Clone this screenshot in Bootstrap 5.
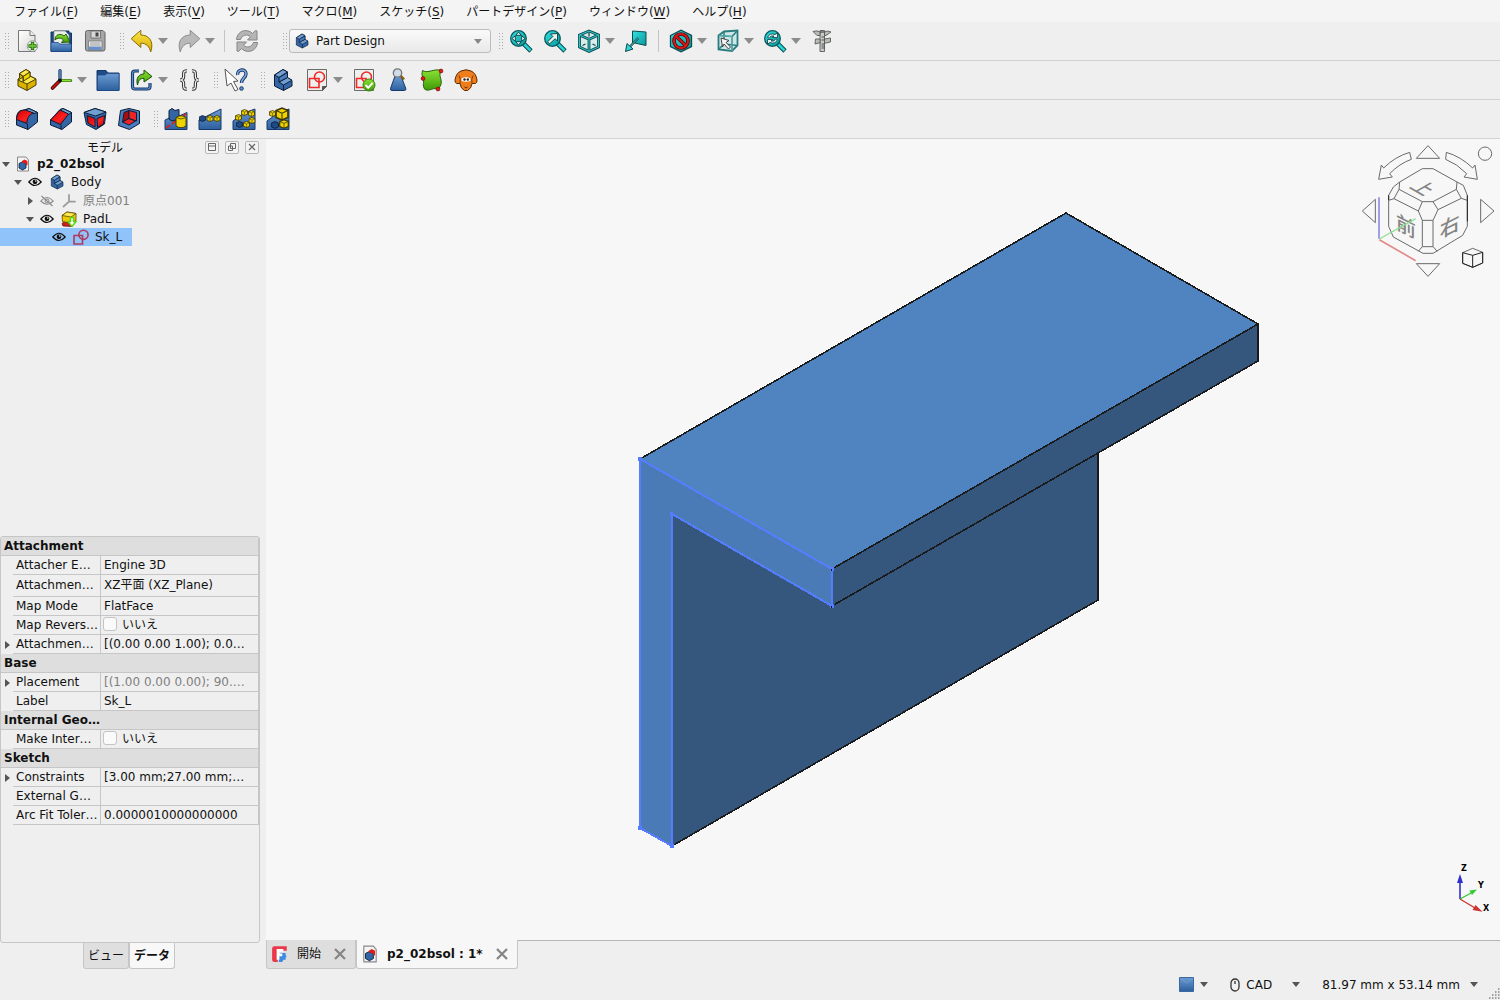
<!DOCTYPE html>
<html lang="ja">
<head>
<meta charset="utf-8">
<meta name="viewport" content="width=device-width, initial-scale=1">
<title>p2_02bsol</title>
<link href="https://cdn.jsdelivr.net/npm/bootstrap@5.3.0/dist/css/bootstrap.min.css" rel="stylesheet">
<style>
  body { font: 12px/18px "DejaVu Sans", "Noto Sans CJK JP", sans-serif; color: #111; background: #efefef; }
  button { color: inherit; }
  .sprite { width: 0; height: 0; position: absolute; }
  .menu-strip { height: 22px; padding-left: 14px; gap: 22px; background: #f4f4f4; line-height: 24px; }
  .menu-strip a { color: #111; text-decoration: none; white-space: nowrap; }
  .menu-strip u { text-underline-offset: 2px; }
  .tool-row { height: 39px; border-bottom: 1px solid #d2d2d2; padding-left: 2px; gap: 7px; }
  .tool-group { display: flex; align-items: center; gap: 4px; }
  .grip { width: 10px; height: 18px; margin-right: -4px; background: radial-gradient(circle, #aaa 0 0.7px, transparent 1px) 2px 0 / 3px 3px; background-clip: content-box; padding: 0 2px; }
  .tool { width: 30px; height: 30px; padding: 0; border: 0; background: none; display: flex; align-items: center; justify-content: center; flex: none; }
  .tool.has-menu { width: 43px; justify-content: flex-start; padding-left: 3px; gap: 4px; }
  .tool svg.ico { width: 24px; height: 24px; }
  .tri { width: 0; height: 0; border: 5px solid transparent; border-top: 6px solid #8c8c8c; border-bottom: 0; }
  .tri-s { width: 0; height: 0; border: 4px solid transparent; border-top: 5px solid #555; border-bottom: 0; }
  .tri-r { width: 0; height: 0; border: 4px solid transparent; border-left: 5px solid #555; border-right: 0; }
  .tool-sep { width: 1px; height: 22px; background: #c4c4c4; margin: 0 3px; }
  .wb-group { margin-left: 11px; }
  .view-group { margin-left: -2px; }
  .wb-box { position: relative; width: 202px; margin-left: -1px; }
  .wb-box select { width: 100%; height: 24px; appearance: none; border: 1px solid #bcbcbc; border-radius: 3px; background: linear-gradient(#fafafa, #e9e9e9); padding: 0 24px 0 26px; color: #111; }
  .wb-box svg { position: absolute; left: 5px; top: 4px; width: 16px; height: 16px; pointer-events: none; }
  .wb-box .tri-s { position: absolute; right: 9px; top: 10px; border-top-color: #888; pointer-events: none; }
  .work { min-height: 0; }
  .docs { min-width: 0; }
  .side { width: 260px; flex: none; margin-right: 6px; }
  .side-head { height: 16px; line-height: 18px; padding-right: 1px; gap: 6px; }
  .side-head span { padding: 2px 76px 0 0; }
  .dock-btn { width: 14px; height: 13px; padding: 0; border: 1px solid #b8b8b8; border-radius: 2px; background: #f4f4f4; display: flex; align-items: center; justify-content: center; }
  .tree { flex: 382 1 0; min-height: 0; overflow: hidden; }
  .tree li { height: 18px; display: flex; align-items: center; white-space: nowrap; }
  .tree .arr { width: 12px; display: flex; justify-content: center; }
  .tree svg { width: 16px; height: 16px; flex: none; }
  .tree .doc { margin-left: 3px; }
  .tree .eye { width: 14px; margin: 0 7px 0 4px; }
  .tree .lbl { padding-left: 6px; }
  .tree .lv1 { padding-left: 12px; }
  .tree .lv2 { padding-left: 24px; }
  .tree .lv3 { padding-left: 48px; background: #90c3f9; width: 132px; }
  .tree .tall { height: 19px; color: #808080; }
  .props { flex: 406 1 0; min-height: 0; overflow: hidden; border: 1px solid #c6c6c6; border-radius: 3px; }
  .props table { table-layout: fixed; width: 100%; border-collapse: separate; border-spacing: 0; }
  .props td, .props th { height: 19px; padding: 0 0 0 3px; line-height: 18px; border-bottom: 1px solid #c6c6c6; border-right: 1px solid #c6c6c6; white-space: nowrap; }
  .props th { background: #dedede; }
  .props td.exp { border: 0; padding: 0 0 0 4px; }
  .props .high td { height: 22px; line-height: 21px; }
  .props .dim { color: #808080; }
  .props input { appearance: none; width: 14px; height: 14px; border: 1px solid #c4c4c4; border-radius: 3px; background: #fafafa; margin: 0 5px 0 -1px; vertical-align: -2px; }
  .low-tabs { padding-right: 2px; }
  .low-tabs button { height: 26px; border: 1px solid #c6c6c6; border-top: 0; border-radius: 0 0 3px 3px; padding: 0 4px; background: #dfdfdf; }
  .low-tabs button.on { background: #f8f8f8; font-weight: bold; }
  .view { background: #f7f7f7; position: relative; flex: 1 1 0; min-height: 0; }
  .view .model { display: block; width: 100%; height: 100%; }
  .navcube { position: absolute; right: 0; top: 0; width: 150px; height: 149px; font-family: "Noto Sans CJK JP", sans-serif; }
  .axes { position: absolute; right: 0; bottom: 20px; width: 50px; height: 60px; font: bold 8px "DejaVu Sans", sans-serif; }
  .doc-tabs { height: 29px; }
  .doc-tab { display: flex; align-items: center; height: 29px; border: 1px solid #c6c6c6; border-top: 0; border-radius: 0 0 3px 3px; background: #dedede; padding: 0 8px 0 4px; }
  .doc-tab.on { background: #f7f7f7; font-weight: bold; }
  .doc-tab > svg { width: 18px; height: 18px; }
  .doc-tab button { border: 0; background: none; padding: 0; display: flex; }
  .doc-tab .tab-name { padding: 0 12px 0 8px; }
  .doc-line { border-top: 1px solid #b4b4b4; }
  .stat { height: 31px; position: relative; padding-right: 22px; gap: 22px; }
  .stat button { border: 0; background: none; padding: 0; display: flex; align-items: center; gap: 6px; }
  .stat .nav-style .tri-s { margin-left: 14px; }
  .stat .corner { position: absolute; right: 0; bottom: 0; width: 12px; height: 12px; }
</style>
</head>
<body>
<svg class="sprite" aria-hidden="true">
  <defs>
    <linearGradient id="gBlue" x1="0" y1="0" x2="0" y2="1"><stop offset="0" stop-color="#6b9bd2"/><stop offset="1" stop-color="#2c5f9e"/></linearGradient>
    <linearGradient id="gYel" x1="0" y1="0" x2="0" y2="1"><stop offset="0" stop-color="#fbe84a"/><stop offset="1" stop-color="#d8a900"/></linearGradient>
    <linearGradient id="gTeal" x1="0" y1="0" x2="1" y2="1"><stop offset="0" stop-color="#34e0e2"/><stop offset="1" stop-color="#06989a"/></linearGradient>
    <linearGradient id="gGrn" x1="0" y1="0" x2="0" y2="1"><stop offset="0" stop-color="#8ae234"/><stop offset="1" stop-color="#3f9a06"/></linearGradient>
    <linearGradient id="gRed" x1="0" y1="0" x2="1" y2="1"><stop offset="0" stop-color="#cc0000"/><stop offset=".6" stop-color="#ff2020"/><stop offset="1" stop-color="#b00000"/></linearGradient>
    <linearGradient id="gPap" x1="0" y1="0" x2="1" y2="1"><stop offset="0" stop-color="#ffffff"/><stop offset="1" stop-color="#d6d8d4"/></linearGradient>
  </defs>
  <symbol id="i-new" viewBox="0 0 24 24"><path d="M3.500 1.500H15l5 5V22.500H3.500Z" fill="url(#gPap)" stroke="#777" /><path d="M15 1.500V6.500H20" fill="#eee" stroke="#777"/><circle cx="17.500" cy="17" r="5.300" fill="#f4f4f4" stroke="#8a8a8a" stroke-width=".8"/><path d="M17.500 12.800V21M13.400 17h8.200" stroke="#1c5e0c" stroke-width="3.400"/><path d="M17.500 13.500V20.300M14.100 17h6.800" stroke="#62c32a" stroke-width="1.900"/></symbol>
  <symbol id="i-open" viewBox="0 0 24 24"><path d="M2 3h3v-1h15v2h2.500v18.500H2Z" fill="#1f4c87" stroke="#143464"/><path d="M5 2h11l4 4v10H5Z" fill="#eceeea" stroke="#8a8c88" stroke-width=".7"/><path d="M6 11C6 5 12 4 15 7l2-2 4 8-8.500.500L14.500 11C12 8.500 8.500 8.500 6 11Z" fill="url(#gGrn)" stroke="#17500a" stroke-width=".9"/><path d="M2 13.500H9l2 1.500h11.500v7.500H2Z" fill="url(#gBlue)" stroke="#204a87" stroke-width=".8"/></symbol>
  <symbol id="i-save" viewBox="0 0 24 24"><path d="M2.500 3.500q0-2 2-2H20l2 2v16.500q0 2-2 2H4.500q-2 0-2-2Z" fill="#a6a6a6" stroke="#666"/><path d="M8 2h9.500v7H8Z" fill="#d8d8d8" stroke="#666" stroke-width=".8"/><path d="M12.500 3.500h3v4h-3Z" fill="#444"/><path d="M5.500 12h13.500v9H5.500Z" fill="#eee" stroke="#777" stroke-width=".8"/><path d="M7 14h10.500M7 16h10.500" stroke="#999"/><path d="M6 17.500h12.500v3.500H6Z" fill="#6a8fc8"/></symbol>
  <symbol id="i-undo" viewBox="0 0 24 24"><path d="M1.200 9.700 10.800 1.300V6C18.500 6 24.500 12 20.700 23 19.500 17.500 16 14 10.800 14.200V18.500Z" fill="url(#gYel)" stroke="#8a6a00" stroke-linejoin="round"/></symbol>
  <symbol id="i-redo" viewBox="0 0 24 24"><path d="M22.800 9.700 13.200 1.300V6C5.500 6-.500 12 3.300 23 4.500 17.500 8 14 13.200 14.200V18.500Z" fill="#b9b9b9" stroke="#8c8c8c" stroke-linejoin="round"/></symbol>
  <symbol id="i-refresh" viewBox="0 0 24 24"><path d="M1.500 10.500C2 4 8 0 14 2.200q2 .7 3.500 2.200L20.500 1.500 22 2v9h-9.500l3-3.200C12 4.500 7 6 5.500 10.500Z" fill="#b5b5b5" stroke="#858585" stroke-linejoin="round"/><path d="M22.500 13.500C22 20 16 24 10 21.800q-2-.7-3.500-2.200L3.500 22.500 2 22V13h9.500l-3 3.200C12 19.500 17 18 18.500 13.500Z" fill="#b5b5b5" stroke="#858585" stroke-linejoin="round"/></symbol>
  <symbol id="i-body" viewBox="0 0 24 24"><g stroke="#0b1f3a" stroke-linejoin="round"><path d="M3.500 7 12 1.500l4.500 2.500v6L21 12.500V18L12.500 22.500 3.500 18Z" fill="#3465a4"/><path d="M3.500 7 12 1.500l4.500 2.500L8 9.500ZM12.500 17 8 14l8.500-4.500L21 12.200Z" fill="#729fcf"/><path d="M8 9.500 16.500 4.500v5L8 14Z" fill="#4a7dbd"/><path d="M12.500 17V22.500" fill="none"/></g></symbol>
  <symbol id="i-part" viewBox="0 0 24 24"><g stroke="#4a3d00" stroke-linejoin="round"><path d="M3 11V18l9 4.500L21 17V11L15 8V4L11 1.500 4.500 5.500V10Z" fill="#d9b300"/><path d="M4.500 5.500 11 1.500 15 4 8 8.500ZM3 12l4.500-2.500L15 8 21 11 12 16Z" fill="#fce94f"/><path d="M8 8.500 15 4V9l-6.500 4Z" fill="#edd400"/><path d="M4.500 5.500 8 8.500V14M12 16v6.500" fill="none"/></g></symbol>
  <symbol id="i-axis" viewBox="0 0 24 24"><g fill="none" stroke-linecap="round"><path d="M11 12V2.500" stroke="#0f2b50" stroke-width="3.200"/><path d="M11 12.500 3.500 20" stroke="#3a0404" stroke-width="3.600"/><path d="M12 12.500h9.500" stroke="#1f4a08" stroke-width="3.200"/><path d="M11 12V2.500" stroke="#4f83c4" stroke-width="1.800"/><path d="M10 13.500 3.500 20" stroke="#c80f0f" stroke-width="1.900"/><path d="M12 12.500h9.500" stroke="#8ae234" stroke-width="1.800"/></g><circle cx="11" cy="12.500" r="1.900" fill="#111"/></symbol>
  <symbol id="i-axisg" viewBox="0 0 24 24"><path d="M12 13V2M12 13 3 21M12 13h10" stroke="#9a9a9a" stroke-width="2.600" fill="none"/></symbol>
  <symbol id="i-folder" viewBox="0 0 24 24"><path d="M1 2.500h9l2 2.500h11v17.500H1Z" fill="#1f4c87" stroke="#16386a"/><path d="M1.500 7H9l2-1.500h12V22.500H1.500Z" fill="url(#gBlue)" stroke="#204a87" stroke-width=".8"/></symbol>
  <symbol id="i-link" viewBox="0 0 24 24"><path d="M9 3H5Q2.500 3 2.500 5.500v13Q2.500 21 5 21h12.500q2.500 0 2.500-2.500V15" fill="none" stroke="#16386a" stroke-width="3.200"/><path d="M9 3H5Q2.500 3 2.500 5.500v13Q2.500 21 5 21h12.500q2.500 0 2.500-2.500V15" fill="none" stroke="#5b8fcc" stroke-width="1.200"/><path d="M7.500 17C5.500 10 9 6 14 6V2L22 8.500 14 14V10.500C10.500 10 8.500 12 7.500 17Z" fill="url(#gGrn)" stroke="#17500a"/></symbol>
  <symbol id="i-brace" viewBox="0 0 24 24"><g fill="none" stroke="#333" stroke-width="3.200"><path d="M10 2.800C5.500 2.500 7 6 6.500 9.500Q6 12 3 12 6 12 6.500 14.500C7 18 5.500 21.500 10 21.200M15 2.800C19.500 2.500 18 6 18.500 9.500q.5 2.500 3.500 2.500-3 0-3.500 2.500c-.5 3.500 1 7-3.500 6.700"/></g><g fill="none" stroke="#f4f4f4" stroke-width="1.200"><path d="M10 2.800C5.500 2.500 7 6 6.500 9.500Q6 12 3 12 6 12 6.500 14.500C7 18 5.500 21.500 10 21.200M15 2.800C19.500 2.500 18 6 18.500 9.500q.5 2.500 3.500 2.500-3 0-3.500 2.500c-.5 3.500 1 7-3.500 6.700"/></g></symbol>
  <symbol id="i-help" viewBox="0 0 24 24"><path d="M13.500 7C13 1 22 0 22 6c0 4-4.500 4-4.500 9" fill="none" stroke="#16386a" stroke-width="3.400"/><path d="M13.500 7C13 1 22 0 22 6c0 4-4.500 4-4.500 9" fill="none" stroke="#7da7d9" stroke-width="1.600"/><circle cx="17.500" cy="20.500" r="1.800" fill="#5b8fcc" stroke="#16386a"/><path d="M1 1 14 13 9.500 13.500 14 21.500 11 23 7 15 3 18Z" fill="#fff" stroke="#555" stroke-linejoin="round"/></symbol>
  <symbol id="i-sketch" viewBox="0 0 24 24"><path d="M2.500 1.500h19v17l-4 4h-15Z" fill="#eef0ee" stroke="#6a6c68"/><path d="M21.500 18.500h-4v4Z" fill="#555" stroke="#555"/><g fill="none" stroke="#ef2929" stroke-width="1.600"><path d="M4.500 10.500h9.500v9H4.500Z"/><circle cx="14.500" cy="9" r="5"/></g></symbol>
  <symbol id="i-valid" viewBox="0 0 24 24"><path d="M2.500 1.500h19v21h-19Z" fill="#eef0ee" stroke="#6a6c68"/><g fill="none" stroke="#ef2929" stroke-width="1.600"><path d="M4.500 10.500h9.500v9H4.500Z"/><circle cx="14.500" cy="9" r="5"/></g><circle cx="17" cy="17" r="6" fill="url(#gGrn)" stroke="#3a8a10"/><path d="m13.500 17 2.700 2.800 4.500-5" fill="none" stroke="#fff" stroke-width="2"/></symbol>
  <symbol id="i-geom" viewBox="0 0 24 24"><path d="M9 8 4.500 20.500Q4 22.500 6 22.500H18.500q1.800 0 1.300-2L15 8Z" fill="url(#gBlue)" stroke="#16386a"/><path d="m14 7 4 4.500" stroke="#8a5a10" stroke-width="2.600"/><circle cx="11.500" cy="5" r="4.200" fill="#cfdbe8" stroke="#777" stroke-width="1.300"/></symbol>
  <symbol id="i-binder" viewBox="0 0 24 24"><path d="M2.500 2.500C8 6 14 0 21.500 2.500 17 8 24 12 20 18.500L18 22C14 18 10 24 5 21.500 1.500 17 5 14 3 10 1.500 7 2 5 2.500 2.500Z" fill="url(#gGrn)" stroke="#27600a"/><g fill="#e31b1b" stroke="#7a0505" stroke-width=".7"><circle cx="21" cy="3" r="1.900"/><circle cx="3" cy="10.500" r="1.900"/><circle cx="18" cy="21" r="1.900"/></g></symbol>
  <symbol id="i-clone" viewBox="0 0 24 24"><path d="M7 3Q2 5 1 12q-.3 2.500 1.500 3.500H6Q6.500 20.500 10.500 22.500h3Q17.500 20.500 18 15.500h3.500q1.800-1 1.500-3.500Q22 5 17 3 12 .5 7 3Z" fill="#ee7d1c" stroke="#5c2a04"/><path d="M5 7.500Q7 11 6 15.500M19 7.500Q17 11 18 15.500" fill="none" stroke="#5c2a04" stroke-width=".8"/><path d="M7.500 10.500q4.500-2.500 9 0v2.500q-4.500 1.500-9 0Z" fill="#fff"/><circle cx="10.500" cy="11.500" r="1.200" fill="#222"/><circle cx="13.800" cy="11.500" r="1.200" fill="#222"/><path d="m10.500 19 1.500 1 1.500-1" stroke="#5c2a04" fill="none"/></symbol>
  <symbol id="i-fitall" viewBox="0 0 24 24"><path d="m14.500 14.500 7.500 7.500" stroke="#0b4a4d" stroke-width="4.600"/><path d="m15 15 6.500 6.500" stroke="#25d3d6" stroke-width="2.600"/><circle cx="9.500" cy="9.500" r="7.800" fill="url(#gTeal)" stroke="#0b5a5d" stroke-width="1.300"/><path d="m9.500 3 2.700 3.300H6.800ZM9.500 16l2.700-3.300H6.800ZM3 9.500l3.300-2.700v5.400ZM16 9.500l-3.300-2.700v5.400Z" fill="#e8f4f4" stroke="#103a3c" stroke-width=".9"/></symbol>
  <symbol id="i-fitsel" viewBox="0 0 24 24"><path d="m14.500 14.500 7.500 7.500" stroke="#0b4a4d" stroke-width="4.600"/><path d="m15 15 6.500 6.500" stroke="#25d3d6" stroke-width="2.600"/><circle cx="9.500" cy="9.500" r="7.800" fill="url(#gTeal)" stroke="#0b5a5d" stroke-width="1.300"/><path d="M14.500 4.500v7.500l-2.400-2.200-5.500 5-2-2 5.300-5.300L7.500 5Z" fill="#e8f4f4" stroke="#103a3c" stroke-width=".9"/></symbol>
  <symbol id="i-iso" viewBox="0 0 24 24"><path d="M2.500 6 12 2l9.500 4v12L12 22.500 2.500 18Z" fill="#d8ecec" stroke="#0b4a4d" stroke-width="2.800"/><path d="M2.500 6l9.500 4.200L21.500 6M12 10.200V22" fill="none" stroke="#0b4a4d" stroke-width="2.800"/><path d="M2.500 6 12 2l9.500 4v12L12 22.500 2.500 18ZM2.500 6l9.500 4.200L21.500 6M12 10.200V22" fill="none" stroke="#2fc4c6" stroke-width="1.100"/><path d="M12 3.500v4M5.500 16.500l3-1.500M18.500 16.500l-3-1.500" stroke="#0b4a4d" stroke-width="1.300"/></symbol>
  <symbol id="i-drawst" viewBox="0 0 24 24"><path d="M8.500 2 22 3v13.500L8.500 13.500Z" fill="url(#gTeal)" stroke="#0b4a4d"/><path d="M14.500 9 6 17.500" stroke="#0b4a4d" stroke-width="2.400"/><path d="M14.500 9 6 17.500" stroke="#7fe8e9" stroke-width=".8"/><path d="M1.500 22.500 3 14.500l6 5.500Z" fill="#2fd4d6" stroke="#0b4a4d"/></symbol>
  <symbol id="i-nogo" viewBox="0 0 24 24"><path d="M1.500 6.500 12 1.200l10.500 5.300v11L12 22.800 1.500 17.500Z" fill="url(#gTeal)" stroke="#0b4a4d" stroke-width="1.300"/><circle cx="12" cy="12" r="7" fill="none" stroke="#500" stroke-width="3.600"/><path d="m7 7 10 10" stroke="#500" stroke-width="3.600"/><circle cx="12" cy="12" r="7" fill="none" stroke="#d81818" stroke-width="2"/><path d="m7 7 10 10" stroke="#d81818" stroke-width="2"/></symbol>
  <symbol id="i-selbox" viewBox="0 0 24 24"><path d="M2.500 6.500 8 2.500l13.500-1v15L16 22 2.500 20.500Z" fill="#cfe6e6" stroke="#2a7c7e" stroke-width="1.800"/><path d="M2.500 6.500 16 7.500V22M16 7.500l5.500-6M8 2.500v12.500L2.500 20.500M8 15l13.500 1.500" fill="none" stroke="#2a7c7e" stroke-width="1.500"/><path d="M3 6.500 16 7.500V22" fill="none" stroke="#6fd0d2" stroke-width=".7"/><path d="M5 9 13 11.500l-3 2L14.500 18l-2 2-4.500-5-1.500 3Z" fill="#f4f4f4" stroke="#333" stroke-width=".9"/></symbol>
  <symbol id="i-zoomsync" viewBox="0 0 24 24"><path d="m14.500 14.500 7.500 7.500" stroke="#0b4a4d" stroke-width="4.600"/><path d="m15 15 6.500 6.500" stroke="#25d3d6" stroke-width="2.600"/><circle cx="9.500" cy="9.500" r="7.800" fill="url(#gTeal)" stroke="#0b5a5d" stroke-width="1.300"/><path d="M4.500 8.500q2-5 7.500-3L14.500 4v4.500H9.500L11 7Q7.500 6 6.500 9ZM14.500 10.500q-2 5-7.500 3L4.500 15v-4.500h5L8 12q3.500 1 4.500-2Z" fill="#e8f4f4" stroke="#103a3c" stroke-width=".8"/></symbol>
  <symbol id="i-caliper" viewBox="0 0 24 24"><path d="M10 1.500h4.500v21H10Z" fill="#c9cbc6" stroke="#5a5b58" stroke-width=".9"/><path d="M3 2.500Q7 1 10 3h4.500q3-2 6.500 0L16 6.500H14.500V3H10V6.500H7ZM5.500 10H10V14H9l-4 1ZM14.500 10l6-1v4L16 14h-1.500Z" fill="#b9bbb6" stroke="#5a5b58" stroke-width=".9"/><path d="M11.500 15h3M11.500 17h3M11.500 19h3M11.500 8h3M11.500 11h3" stroke="#333" stroke-width=".8"/></symbol>
  <symbol id="i-fillet" viewBox="0 0 24 24"><g stroke="#0b1f3a" stroke-linejoin="round"><path d="M1.500 11C2 6 4 3 7.500 3.500L14 1.500l8.500 4V15L13 22.500 1.500 18Z" fill="#3465a4"/><path d="M14 1.500l8.500 4L19 6.500 10 3Z" fill="#729fcf"/><path d="M1.500 12.500C2 6 5 2.500 10.500 3L19 6.300C15 6.500 12 10 12 16.500Z" fill="url(#gRed)"/><path d="M12.500 17V22.500" fill="none"/></g></symbol>
  <symbol id="i-chamfer" viewBox="0 0 24 24"><g stroke="#0b1f3a" stroke-linejoin="round"><path d="M1.500 13 11 2.500l3-1 8.500 4V15L13 22.500 1.500 18Z" fill="#3465a4"/><path d="M14 1.500l8.500 4-3 2L11 3Z" fill="#729fcf"/><path d="M1.500 13 11 3l8.500 4L11.500 17.500Z" fill="url(#gRed)"/><path d="M12 17.500V22.500" fill="none"/></g></symbol>
  <symbol id="i-draft" viewBox="0 0 24 24"><g stroke="#0b1f3a" stroke-linejoin="round"><path d="M1 5.500 12 1.500l11 3.500-1.500 12L13 22.500 3.500 17.500Z" fill="#3465a4"/><path d="M1 5.500 12 1.500l11 3.500-10.500 4Z" fill="#729fcf"/><path d="m4 8.500 8 3V20L5 16ZM14 11.500l7.500-3-1 8.500-6 3.500Z" fill="url(#gRed)"/></g></symbol>
  <symbol id="i-thick" viewBox="0 0 24 24"><g stroke="#0b1f3a" stroke-linejoin="round"><path d="M3.500 3.500 12 1.500 22.500 4v12.500l-10 6-11-4Z" fill="#4a7dbd"/><path d="m7 5.500 5-2V11.500L5.500 15Z" fill="#a80c0c"/><path d="m12 3.500 7.500 2V14L12 11.500ZM5.500 15l6.500-3.500 6.500 2.500-6.500 4Z" fill="#f02424"/></g></symbol>
  <symbol id="i-mirror" viewBox="0 0 24 24"><path d="M1 13 10 9h5L23 5.500V22.500H1Z" fill="url(#gBlue)" stroke="#16386a"/><path d="m2 21 20-14" stroke="#e31b1b" stroke-width="1.600" stroke-dasharray="5 2"/><path d="M5 3.500 8 1.500l3 2 4-1v9.500L8 14l-3-2Z" fill="#3465a4" stroke="#0b1f3a"/><path d="M12 10.500q5-3.500 10 0V19q-5 3.500-10 0Z" fill="#edd400" stroke="#4a3d00"/><path d="M12 10.500q5 3 10 0" fill="none" stroke="#4a3d00" stroke-width=".8"/></symbol>
  <symbol id="cubeY" viewBox="0 0 8 8"><path d="M.6 2 4 .6 7.400 2v4L4 7.400.6 6Z" fill="#edd400" stroke="#3d3200" stroke-width=".9"/><path d="M.6 2 4 3.500 7.400 2M4 3.500v4" fill="none" stroke="#3d3200" stroke-width=".6"/></symbol>
  <symbol id="cubeB" viewBox="0 0 8 8"><path d="M.6 2 4 .6 7.400 2v4L4 7.400.6 6Z" fill="#204a87" stroke="#0b1f3a" stroke-width=".9"/></symbol>
  <symbol id="i-linpat" viewBox="0 0 24 24"><path d="M1 13 23 2V22.500H1Z" fill="url(#gBlue)" stroke="#16386a"/><use href="#cubeB" x="1" y="8" width="7" height="7"/><use href="#cubeY" x="8.500" y="8" width="7" height="7"/><use href="#cubeY" x="15.500" y="8" width="7" height="7"/></symbol>
  <symbol id="i-polpat" viewBox="0 0 24 24"><path d="M1 14 12 6 23 2V22.500H1Z" fill="url(#gBlue)" stroke="#16386a"/><use href="#cubeY" x="3" y="7" width="7" height="7"/><use href="#cubeY" x="9" y="2" width="7" height="7"/><use href="#cubeY" x="16" y="3" width="7" height="7"/><use href="#cubeY" x="16.500" y="10" width="7" height="7"/><use href="#cubeY" x="11" y="14" width="7" height="7"/><use href="#cubeB" x="4" y="14" width="7" height="7"/></symbol>
  <symbol id="i-multi" viewBox="0 0 24 24"><path d="M1 14 12 6 23 2V22.500H1Z" fill="url(#gBlue)" stroke="#16386a"/><use href="#cubeY" x="3" y="3" width="7" height="7"/><use href="#cubeY" x="9" y="0" width="14" height="14"/><use href="#cubeB" x="5" y="14" width="8" height="8"/><use href="#cubeY" x="13" y="12" width="10" height="10"/></symbol>
  <symbol id="i-doc" viewBox="0 0 16 16"><path d="M2.500 1H11l2.500 3v11H2.500Z" fill="#f4f4f4" stroke="#888"/><path d="M4 7.500 7 6l4 1.500V12l-3.500 2L4 12Z" fill="#3465a4" stroke="#0b1f3a" stroke-width=".8"/><path d="m7 5 2.500-1.500L12.500 5v4L11 9.500V7.500L7 6.500Z" fill="#e31b1b"/></symbol>
  <symbol id="i-eye" viewBox="0 0 14 12"><path d="M.8 6Q7-1.500 13.200 6 7 13 .8 6Z" fill="none" stroke="currentColor" stroke-width="1.200"/><circle cx="7" cy="5.800" r="2.400" fill="currentColor"/><circle cx="7.800" cy="5" r=".8" fill="#fff"/></symbol>
  <symbol id="i-eyeoff" viewBox="0 0 14 12"><path d="M.8 6Q7-1 13.200 6 7 12.500.8 6ZM1.500 1l11 10" fill="none" stroke="#888" stroke-width="1.100"/><circle cx="7" cy="6" r="2" fill="none" stroke="#888"/></symbol>
  <symbol id="i-pad" viewBox="0 0 16 16"><path d="M1 12.500 4 10l9 1-2 4.500-9-.5Z" fill="#cc2020" stroke="#600" stroke-width=".7"/><path d="M1 4.500 6 1l9 1.500v7L9 12 1.500 10.500Z" fill="#edc900" stroke="#5a4a00" stroke-width=".8"/><path d="M1 4.500 6 1l9 1.500L10 6Z" fill="#fce94f" stroke="#5a4a00" stroke-width=".8"/><path d="M9.500 6.500h3v4H15l-4 5-4-5h2.500Z" fill="#fff" stroke="#5fd41a" stroke-width="1.500"/></symbol>
  <symbol id="i-sk" viewBox="0 0 16 16"><g fill="none" stroke="#b03a5c" stroke-width="1.600"><path d="M1 6.500h8.500V15H1Z"/><circle cx="10.500" cy="5.800" r="4.600"/></g></symbol>
  <symbol id="i-x" viewBox="0 0 14 14"><path d="m2 2 10 10M12 2 2 12" stroke="#868686" stroke-width="2.300"/></symbol>
</svg>

<div class="d-flex flex-column vh-100 overflow-hidden">
  <nav class="menu-strip d-flex">
    <a href="#">ファイル(<u>F</u>)</a><a href="#">編集(<u>E</u>)</a><a href="#">表示(<u>V</u>)</a><a href="#">ツール(<u>T</u>)</a><a href="#">マクロ(<u>M</u>)</a><a href="#">スケッチ(<u>S</u>)</a><a href="#">パートデザイン(<u>P</u>)</a><a href="#">ウィンドウ(<u>W</u>)</a><a href="#">ヘルプ(<u>H</u>)</a>
  </nav>

  <div class="tool-row d-flex align-items-center">
    <div class="tool-group"><i class="grip"></i>
      <button class="tool" aria-label="新規"><svg class="ico"><use href="#i-new"/></svg></button>
      <button class="tool" aria-label="開く"><svg class="ico"><use href="#i-open"/></svg></button>
      <button class="tool" aria-label="保存"><svg class="ico"><use href="#i-save"/></svg></button>
    </div>
    <div class="tool-group"><i class="grip"></i>
      <button class="tool has-menu" aria-label="元に戻す"><svg class="ico"><use href="#i-undo"/></svg><i class="tri"></i></button>
      <button class="tool has-menu" aria-label="やり直し"><svg class="ico"><use href="#i-redo"/></svg><i class="tri"></i></button>
      <i class="tool-sep"></i>
      <button class="tool" aria-label="更新"><svg class="ico"><use href="#i-refresh"/></svg></button>
    </div>
    <div class="tool-group wb-group"><i class="grip"></i>
      <div class="wb-box"><svg><use href="#i-body"/></svg>
        <select aria-label="ワークベンチ"><option>Part Design</option></select><i class="tri-s"></i></div>
    </div>
    <div class="tool-group view-group"><i class="grip"></i>
      <button class="tool" aria-label="全てにフィット"><svg class="ico"><use href="#i-fitall"/></svg></button>
      <button class="tool" aria-label="選択にフィット"><svg class="ico"><use href="#i-fitsel"/></svg></button>
      <button class="tool has-menu" aria-label="等角投影"><svg class="ico"><use href="#i-iso"/></svg><i class="tri"></i></button>
      <button class="tool" aria-label="整列"><svg class="ico"><use href="#i-drawst"/></svg></button>
      <i class="tool-sep"></i>
      <button class="tool has-menu" aria-label="描画スタイル"><svg class="ico"><use href="#i-nogo"/></svg><i class="tri"></i></button>
      <button class="tool has-menu" aria-label="選択"><svg class="ico"><use href="#i-selbox"/></svg><i class="tri"></i></button>
      <button class="tool has-menu" aria-label="同期"><svg class="ico"><use href="#i-zoomsync"/></svg><i class="tri"></i></button>
      <button class="tool" aria-label="計測"><svg class="ico"><use href="#i-caliper"/></svg></button>
    </div>
  </div>

  <div class="tool-row d-flex align-items-center">
    <div class="tool-group"><i class="grip"></i>
      <button class="tool" aria-label="パーツ"><svg class="ico"><use href="#i-part"/></svg></button>
      <button class="tool has-menu" aria-label="座標系"><svg class="ico"><use href="#i-axis"/></svg><i class="tri"></i></button>
      <button class="tool" aria-label="グループ"><svg class="ico"><use href="#i-folder"/></svg></button>
      <button class="tool has-menu" aria-label="リンク"><svg class="ico"><use href="#i-link"/></svg><i class="tri"></i></button>
      <button class="tool" aria-label="変数セット"><svg class="ico"><use href="#i-brace"/></svg></button>
    </div>
    <div class="tool-group"><i class="grip"></i>
      <button class="tool" aria-label="ヘルプ"><svg class="ico"><use href="#i-help"/></svg></button>
    </div>
    <div class="tool-group"><i class="grip"></i>
      <button class="tool" aria-label="ボディー"><svg class="ico"><use href="#i-body"/></svg></button>
      <button class="tool has-menu" aria-label="スケッチ"><svg class="ico"><use href="#i-sketch"/></svg><i class="tri"></i></button>
      <button class="tool" aria-label="検証"><svg class="ico"><use href="#i-valid"/></svg></button>
      <button class="tool" aria-label="ジオメトリー"><svg class="ico"><use href="#i-geom"/></svg></button>
      <button class="tool" aria-label="シェイプバインダー"><svg class="ico"><use href="#i-binder"/></svg></button>
      <button class="tool" aria-label="クローン"><svg class="ico"><use href="#i-clone"/></svg></button>
    </div>
  </div>

  <div class="tool-row d-flex align-items-center">
    <div class="tool-group"><i class="grip"></i>
      <button class="tool" aria-label="フィレット"><svg class="ico"><use href="#i-fillet"/></svg></button>
      <button class="tool" aria-label="面取り"><svg class="ico"><use href="#i-chamfer"/></svg></button>
      <button class="tool" aria-label="抜き勾配"><svg class="ico"><use href="#i-draft"/></svg></button>
      <button class="tool" aria-label="厚み"><svg class="ico"><use href="#i-thick"/></svg></button>
    </div>
    <div class="tool-group"><i class="grip"></i>
      <button class="tool" aria-label="鏡像"><svg class="ico"><use href="#i-mirror"/></svg></button>
      <button class="tool" aria-label="直線状パターン"><svg class="ico"><use href="#i-linpat"/></svg></button>
      <button class="tool" aria-label="円状パターン"><svg class="ico"><use href="#i-polpat"/></svg></button>
      <button class="tool" aria-label="マルチ変換"><svg class="ico"><use href="#i-multi"/></svg></button>
    </div>
  </div>

  <div class="work d-flex flex-fill">
    <aside class="side d-flex flex-column">
      <div class="side-head d-flex justify-content-end align-items-center">
        <span>モデル</span>
        <button class="dock-btn" aria-label="折りたたむ"><svg width="8" height="8"><path d="M.5.5h7v7h-7ZM.5 3h7" fill="none" stroke="#666"/></svg></button>
        <button class="dock-btn" aria-label="切り離す"><svg width="8" height="8"><path d="M2.500.5h5v5h-5ZM.5 3h4v4.500h-4Z" fill="none" stroke="#666"/></svg></button>
        <button class="dock-btn" aria-label="閉じる"><svg width="8" height="8"><path d="m1 1 6 6M7 1 1 7" stroke="#666" stroke-width="1.300"/></svg></button>
      </div>
      <ul class="tree list-unstyled mb-0">
        <li><span class="arr"><i class="tri-s"></i></span><svg class="doc"><use href="#i-doc"/></svg><b class="lbl">p2_02bsol</b></li>
        <li class="lv1"><span class="arr"><i class="tri-s"></i></span><svg class="eye"><use href="#i-eye"/></svg><svg><use href="#i-body"/></svg><span class="lbl">Body</span></li>
        <li class="lv2 tall"><span class="arr"><i class="tri-r"></i></span><svg class="eye"><use href="#i-eyeoff"/></svg><svg><use href="#i-axisg"/></svg><span class="lbl">原点001</span></li>
        <li class="lv2"><span class="arr"><i class="tri-s"></i></span><svg class="eye"><use href="#i-eye"/></svg><svg><use href="#i-pad"/></svg><span class="lbl">PadL</span></li>
        <li class="lv3"><svg class="eye"><use href="#i-eye"/></svg><svg><use href="#i-sk"/></svg><span class="lbl">Sk_L</span></li>
      </ul>
      <div class="props">
        <table>
          <colgroup><col style="width:12px"><col style="width:88px"><col></colgroup>
          <tr><th colspan="3">Attachment</th></tr>
          <tr><td class="exp"></td><td>Attacher E…</td><td>Engine 3D</td></tr>
          <tr class="high"><td class="exp"></td><td>Attachmen…</td><td>XZ平面 (XZ_Plane)</td></tr>
          <tr><td class="exp"></td><td>Map Mode</td><td>FlatFace</td></tr>
          <tr><td class="exp"></td><td><label for="rev">Map Revers…</label></td><td><input type="checkbox" id="rev">いいえ</td></tr>
          <tr><td class="exp"><i class="tri-r d-block"></i></td><td>Attachmen…</td><td>[(0.00 0.00 1.00); 0.0…</td></tr>
          <tr><th colspan="3">Base</th></tr>
          <tr><td class="exp"><i class="tri-r d-block"></i></td><td>Placement</td><td class="dim">[(1.00 0.00 0.00); 90.…</td></tr>
          <tr><td class="exp"></td><td>Label</td><td>Sk_L</td></tr>
          <tr><th colspan="3">Internal Geo…</th></tr>
          <tr><td class="exp"></td><td><label for="mk">Make Inter…</label></td><td><input type="checkbox" id="mk">いいえ</td></tr>
          <tr><th colspan="3">Sketch</th></tr>
          <tr><td class="exp"><i class="tri-r d-block"></i></td><td>Constraints</td><td>[3.00 mm;27.00 mm;…</td></tr>
          <tr><td class="exp"></td><td>External G…</td><td></td></tr>
          <tr><td class="exp"></td><td>Arc Fit Toler…</td><td>0.0000010000000000</td></tr>
        </table>
      </div>
      <div class="low-tabs d-flex justify-content-center"><button>ビュー</button><button class="on">データ</button></div>
    </aside>

    <main class="docs d-flex flex-column flex-fill">
      <div class="view">
        <svg class="model" viewBox="266 139 1234 801" role="img" aria-label="PadL">
          <path d="M640 459 1066 213 1258 324 832 569Z" fill="#4f84c0"/>
          <path d="M672 514 832 606 1098 453V600L672 846Z" fill="#35577e"/>
          <path d="M832 569 1258 324V361L832 606Z" fill="#35577e"/>
          <path d="M640 459 832 569V606L672 514V846L640 828Z" fill="#4a7bb6"/>
          <g fill="none" stroke-width="2" shape-rendering="crispEdges">
            <path d="M640 459 1066 213 1258 324V361L832 606M832 569 1258 324M1098 453V600L672 846" stroke="#1a1a1a" stroke-width="1.600"/>
            <path d="M640 459 832 569V606L672 514V846L640 828Z" stroke="#557dff"/>
          </g>
          <path d="M638 457h4v4h-4ZM638 826h4v4h-4ZM670 844h4v4h-4ZM670 512h3v4h-3ZM830 567h4v4h-4ZM830 604h4v4h-4Z" fill="#557dff"/>
          <path d="M831 569h1v2h-1ZM831 606h1v2h-1Z" fill="#111"/>
        </svg>
        <svg class="navcube" viewBox="0 3 450 447" role="img" aria-label="ナビゲーションキューブ">
          <g fill="#f7f7f7" stroke="#6a6a6a" stroke-width="3" stroke-linejoin="round">
            <path d="M234 23 269 61H199ZM234 415 269 377H199ZM37 219 76 184V254ZM432 219 392 184V254Z"/>
            <circle cx="405" cy="47" r="20"/>
            <path d="M179 43Q135 56 101 90L94 81 86 124 127 117 119 107Q148 77 184 64ZM289 43Q333 56 368 90L375 81 382 124 342 117 350 107Q321 77 287 64Z"/>
            <path d="M338 344 368 331 398 343V375L368 388 338 376Z"/>
            <path d="M217 92H249L321 132 340 142 352 172V265L338 292 249 346H219L130 297 116 265V172L130 147 149 132Z"/>
            <path d="M149 132 147 154 217 191H249L319 154 321 132M147 154 132 182 205 219 217 191M319 154 334 181 264 215 249 191M205 219 217 247H249L264 215M217 247V326L205 340M249 247V326L262 340M217 326H249M132 182 116 187M334 181 352 187" fill="none"/>
          </g>
          <path d="M338 344 368 352 398 343V375L368 388 338 376ZM368 352V388" fill="none" stroke="#222" stroke-width="3"/>
          <path d="M352 172V250M116 172V186" stroke="#222" stroke-width="3"/>
          <g fill="#858585" font-size="60" text-anchor="middle" font-weight="500">
            <text transform="translate(168 265) skewY(27)" y="22">前</text>
            <text transform="translate(299 265) skewY(-27)" y="22">右</text>
            <text transform="translate(220 150) rotate(30) skewX(-30)" y="20" font-size="54">上</text>
          </g>
          <path d="M87 178V302" stroke="#8e8ee6" stroke-width="5"/>
          <path d="M88 303 197 242" stroke="#8ee08e" stroke-width="4"/>
          <path d="M88 305 197 368" stroke="#e08a8a" stroke-width="5"/>
        </svg>
        <svg class="axes" viewBox="0 0 50 60" role="img" aria-label="XYZ">
          <path d="M10 39V20" stroke="#3030cc" stroke-width="1.600"/><path d="m10 14 3 9H7Z" fill="#3030cc"/>
          <path d="m10 39 12-6.500" stroke="#33cc33" stroke-width="1.400"/><path d="m27 29.500-7.500 1 2.500 4.500Z" fill="#33cc33"/>
          <path d="m10 39 15 9" stroke="#cc3333" stroke-width="1.400"/><path d="m32.500 51.700-10-1.700 3-5Z" fill="#cc3333"/>
          <text x="11" y="11">Z</text><text x="28" y="28">Y</text><text x="33" y="51">X</text>
        </svg>
      </div>
      <div class="doc-tabs d-flex">
        <div class="doc-tab"><svg viewBox="0 0 16 16"><path d="M1 3Q1 1 3 1H14V5H6V15H3Q1 15 1 13Z" fill="#e8384a"/><path d="M8 7h5v2l1 1-1 1v2H11l-1 2H7V9Z" fill="#3d8be0"/><path d="M5 3.500h6V6H7.500v1.500H10V10H7.500v3H5Z" fill="#fff"/></svg><span class="tab-name">開始</span><button aria-label="閉じる"><svg width="14" height="14"><use href="#i-x"/></svg></button></div>
        <div class="doc-tab on"><svg><use href="#i-doc"/></svg><span class="tab-name">p2_02bsol : 1*</span><button aria-label="閉じる"><svg width="14" height="14"><use href="#i-x"/></svg></button></div>
        <div class="doc-line flex-fill"></div>
      </div>
    </main>
  </div>

  <footer class="stat d-flex justify-content-end align-items-center">
    <button aria-label="背景"><svg width="15" height="15"><path d="M.5.5h14v14H.5Z" fill="url(#gBlue)" stroke="#3a68a0"/><path d="m1 1 6.500 5L14 1" fill="none" stroke="#6f9bd0"/></svg><i class="tri-s"></i></button>
    <button class="nav-style"><svg width="10" height="14"><rect x="1" y="1" width="8" height="12" rx="4" fill="none" stroke="#333" stroke-width="1.300"/><path d="M5 3v3" stroke="#333" stroke-width="1.300"/></svg>CAD<i class="tri-s"></i></button>
    <button>81.97 mm x 53.14 mm<i class="tri-s ms-1"></i></button>
    <svg class="corner"><path d="M10 1h2M7 4h5M4 7h8M1 10h11" stroke="#888" stroke-width="1.500" stroke-dasharray="1.500 1.500"/></svg>
  </footer>
</div>
<script src="https://cdn.jsdelivr.net/npm/bootstrap@5.3.0/dist/js/bootstrap.bundle.min.js"></script>
</body>
</html>
